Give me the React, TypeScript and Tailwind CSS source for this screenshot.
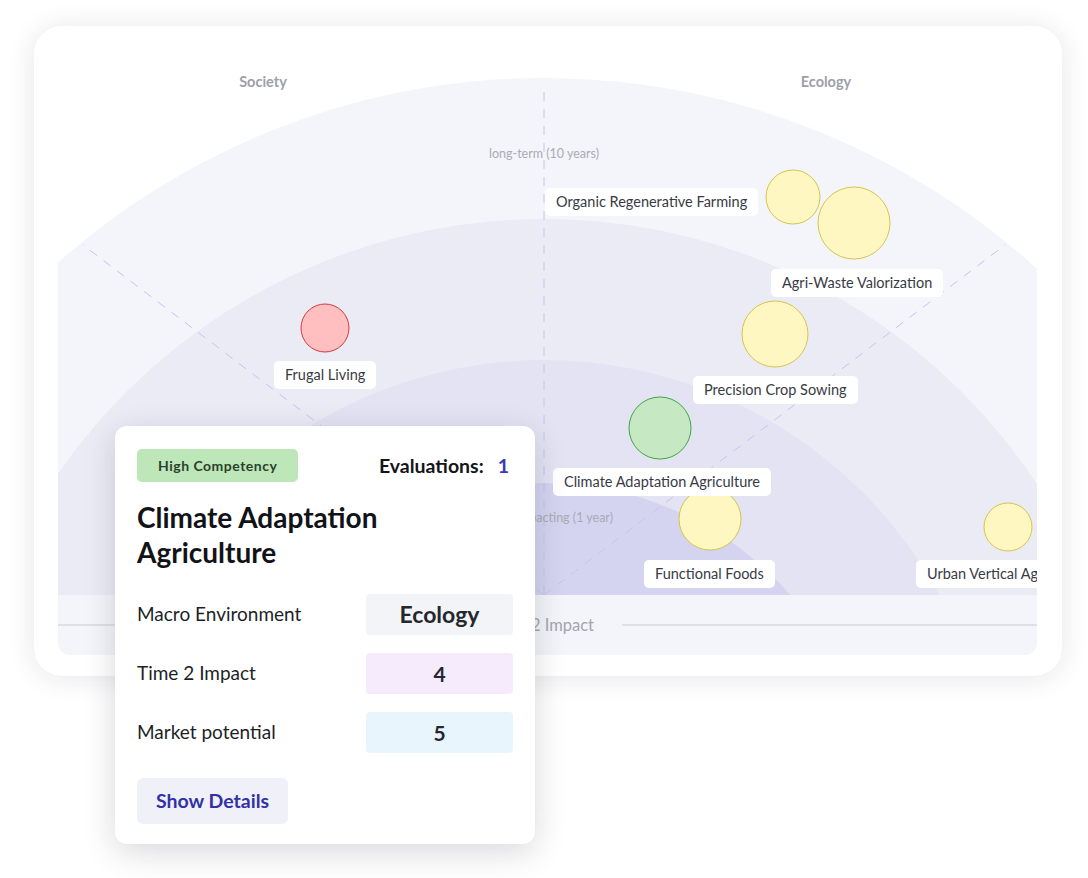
import React from "react";

type Tone = "yellow" | "red" | "green";

const tones: Record<Tone, { fill: string; stroke: string }> = {
  yellow: { fill: "#fff7c1", stroke: "#d6c44c" },
  red: { fill: "#ffbec0", stroke: "#d63a3d" },
  green: { fill: "#c6e8c3", stroke: "#43a445" },
};

// plot coords: origin at the top-left of the plot canvas
const bubbles: { cx: number; cy: number; r: number; tone: Tone }[] = [
  { cx: 735, cy: 151, r: 27, tone: "yellow" },
  { cx: 796, cy: 177, r: 36, tone: "yellow" },
  { cx: 717, cy: 288, r: 33, tone: "yellow" },
  { cx: 602, cy: 382, r: 31, tone: "green" },
  { cx: 652, cy: 473, r: 31, tone: "yellow" },
  { cx: 950, cy: 481, r: 24, tone: "yellow" },
  { cx: 267, cy: 282, r: 24, tone: "red" },
];

const labels = [
  { text: "Organic Regenerative Farming", x: 487, y: 142 },
  { text: "Agri-Waste Valorization", x: 713, y: 223 },
  { text: "Frugal Living", x: 216, y: 315 },
  { text: "Precision Crop Sowing", x: 635, y: 330 },
  { text: "Climate Adaptation Agriculture", x: 495, y: 422 },
  { text: "Functional Foods", x: 586, y: 514 },
  { text: "Urban Vertical Agriculture", x: 858, y: 514 },
];

const rows = [
  { label: "Macro Environment", value: "Ecology", bg: "bg-[#f3f4f8]", size: "text-[23px]" },
  { label: "Time 2 Impact", value: "4", bg: "bg-[#f6ebfc]", size: "text-[21px]" },
  { label: "Market potential", value: "5", bg: "bg-[#e9f5fd]", size: "text-[21px]" },
];

function Rings() {
  const cx = 486;
  const cy = 764;
  return (
    <svg width="979" height="549" className="absolute inset-0">
      <circle cx={cx} cy={cy} r={732} fill="#f4f5fb" />
      <circle cx={cx} cy={cy} r={591} fill="#ebebf6" />
      <circle cx={cx} cy={cy} r={450} fill="#e3e3f4" />
      <circle cx={cx} cy={cy} r={327} fill="#d4d4f1" />
      <g stroke="#c5c4f2" strokeWidth="1" strokeDasharray="9 8" fill="none">
        <line x1={486} y1={46} x2={486} y2={549} />
        <line x1={486} y1={549} x2={25} y2={199} />
        <line x1={486} y1={549} x2={947} y2={199} />
      </g>
      {bubbles.map((b, i) => (
        <circle
          key={i}
          cx={b.cx}
          cy={b.cy}
          r={b.r}
          fill={tones[b.tone].fill}
          stroke={tones[b.tone].stroke}
          strokeWidth="1"
        />
      ))}
    </svg>
  );
}

function DetailCard() {
  return (
    <div className="absolute left-[115px] top-[426px] w-[420px] rounded-[12px] bg-white px-[22px] pt-[23px] pb-[20px] shadow-[0_8px_32px_rgba(20,20,40,0.16)]">
      <div className="flex items-center justify-between">
        <span className="flex h-[33px] items-center rounded-[5px] bg-[#bde6b9] px-[21px] text-[14px] font-bold tracking-[0.5px] text-[#2c3f2d]">
          High Competency
        </span>
        <span className="mr-[4px] text-[19.5px] font-bold text-[#141519]">
          Evaluations:<span className="ml-[14px] text-[#3a3aae]">1</span>
        </span>
      </div>
      <h2 className="mt-[18px] w-[300px] text-[28px] font-bold leading-[35px] text-[#121318]">
        Climate Adaptation Agriculture
      </h2>
      <div className="mt-[24px] flex flex-col gap-[18px]">
        {rows.map((r) => (
          <div key={r.label} className="flex items-center justify-between">
            <span className="text-[19px] text-[#1d1f26]">{r.label}</span>
            <span
              className={`flex h-[41px] w-[147px] items-center justify-center rounded-[4px] font-bold text-[#25272f] ${r.bg} ${r.size}`}
            >
              {r.value}
            </span>
          </div>
        ))}
      </div>
      <button className="mt-[25px] flex h-[46px] w-[151px] items-center justify-center rounded-[6px] bg-[#f0f1f8] text-[19.5px] font-bold text-[#3232a6]">
        Show Details
      </button>
    </div>
  );
}

export default function App() {
  return (
    <div
      className="relative h-[878px] w-[1088px] overflow-hidden bg-white pl-[34px] pt-[26px]"
      style={{ fontFamily: "Lato, 'Liberation Sans', sans-serif" }}
    >
      <div className="h-[650px] w-[1028px] rounded-[28px] bg-white px-[24px] pt-[20px] shadow-[0_2px_28px_rgba(30,30,60,0.11)]">
        <div className="flex w-[979px] flex-col overflow-hidden rounded-b-[12px]">
          <div className="relative h-[549px] overflow-hidden bg-white">
            <Rings />
            <span className="absolute left-[205px] top-[36px] -translate-x-1/2 -translate-y-1/2 text-[14.5px] font-bold text-[#9d9fa9]">
              Society
            </span>
            <span className="absolute left-[768px] top-[36px] -translate-x-1/2 -translate-y-1/2 text-[14.5px] font-bold text-[#9d9fa9]">
              Ecology
            </span>
            <span className="absolute left-[486px] top-[108px] -translate-x-1/2 -translate-y-1/2 whitespace-nowrap text-[12.5px] text-[#a9abb5]">
              long-term (10 years)
            </span>
            <span className="absolute right-[424px] top-[472px] -translate-y-1/2 whitespace-nowrap text-[12.5px] text-[#a9abb5]">
              short-term impacting (1 year)
            </span>
            {labels.map((l) => (
              <div
                key={l.text}
                className="absolute flex h-[28px] items-center whitespace-nowrap rounded-[5px] bg-white px-[11px] text-[14.5px] text-[#383b45]"
                style={{ left: l.x, top: l.y }}
              >
                {l.text}
              </div>
            ))}
          </div>
          <div className="flex h-[60px] items-center bg-[#f4f5fa]">
            <div className="h-[2px] flex-1 bg-[#dfe0e5]" />
            <span className="mx-[28px] text-[16.5px] text-[#a3a5af]">Time 2 Impact</span>
            <div className="h-[2px] w-[415px] bg-[#dfe0e5]" />
          </div>
        </div>
      </div>
      <DetailCard />
    </div>
  );
}
